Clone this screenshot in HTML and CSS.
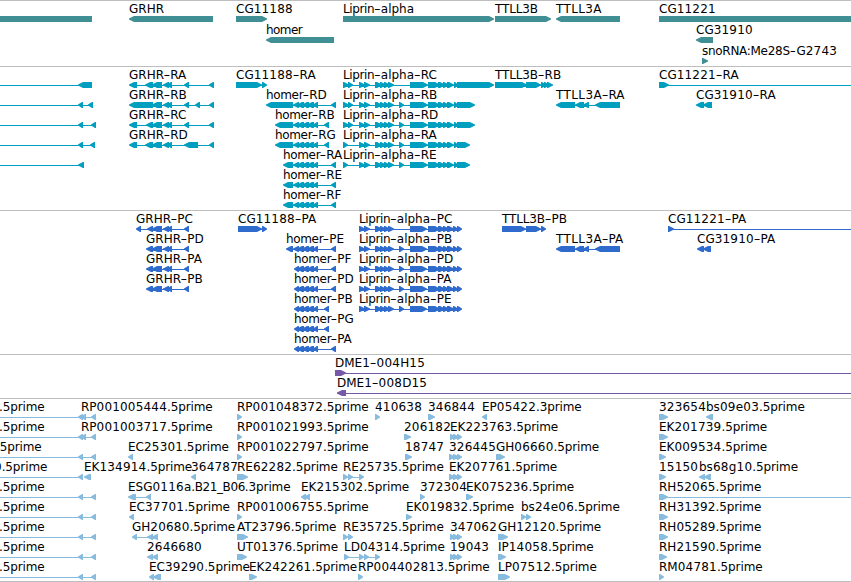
FILE: index.html
```html
<!DOCTYPE html>
<html lang="en">
<head>
<meta charset="utf-8">
<title>Genome browser tracks</title>
<link rel="stylesheet" href="styles.css">
</head>
<body>
<main class="browser" id="browser"></main>
<script src="tracks.js"></script>
</body>
</html>
```
FILE: styles.css
```css
body {
  margin: 0;
  background: #fff;
}

.browser {
  display: flex;
  flex-direction: column;
  width: 851px;
  height: 582px;
  box-sizing: border-box;
  border-bottom: 1px solid #bebebe;
  overflow: hidden;
}

.track {
  display: flex;
  flex-direction: column;
  flex: none;
  box-sizing: border-box;
  padding: 2px 0 1px;
  border-top: 1px solid #bebebe;
}

.row {
  display: block;
  flex: none;
  width: 851px;
  height: 20px;
  overflow: visible;
}

.gene { padding-bottom: 0; color: #3f8f94; }
.gene .row { height: 21px; }
.transcript { color: #009fc0; }
.protein { color: #2f6bcd; }
.clone { color: #7558a8; }
.est { padding-bottom: 0; color: #87bcde; }

.shape { fill: currentColor; }

.label {
  font: 12px "DejaVu Sans", sans-serif;
  fill: #000;
}
```
FILE: tracks.js
```js
// Feature: [label, labelX, strand, exons, lineStart, lineEnd]
// strand: "+" points right, "-" points left, "=" plain block.
const cluster = ' 293-299 297-304 302-309 307-314 313-318 ';
const lipStart = '359-365 364-370 375-382 380-386 384-390 388-394 ';
const lipMid = '410-428 428-440 438-445 443-449 447-454 454-458 ';
const lip = (id, first, extra, end) =>
  ['Liprin-alpha-' + id, 343, '+', first + lipStart + extra + lipMid + '457-' + end];
const lipP = (id, extra) =>
  ['Liprin-alpha-' + id, 359, '+', lipStart + extra + '410-427 428-440 438-445 443-449 447-454 453-458 457-462'];
const hom = (id, x, last) => ['homer-' + id, x, '-', x + '-293' + cluster + last];
const homP = (id, last) => ['homer-' + id, 294, '-', '294-299 297-304 302-309 307-314 313-318 ' + last];
const grhrP = id => ['GRHR-' + id, 146, '-', '146-153 152-162 163-169 167-172 184-189'];
const left = exons => ['', 0, '-', exons, 0];
const leftEst = (label, x, exons) => [label, x, '-', exons, 0];
const A = '343-349 348-353 ', B = '343-348 ', C = '399-404 ';
const triple = x => x + '-455 453-459 457-462';

const tracks = [
  ['gene', [
    [['', 0, '=', '0-92'], ['GRHR', 129, '-', '129-213'], ['CG11188', 236, '+', '236-267'],
     ['Liprin-alpha', 343, '+', '343-494'], ['TTLL3B', 495, '+', '495-551'],
     ['TTLL3A', 556, '-', '556-620'], ['CG11221', 659, '=', '659-851']],
    [['homer', 266, '-', '266-334'], ['CG31910', 696, '-', '696-713']],
    [['snoRNA:Me28S-G2743', 702, '+', '702-708']]
  ]],
  ['transcript', [
    [left('78-92'), ['GRHR-RA', 129, '-', '129-137 145-153 152-162 163-169 167-172 184-189 209-214'],
     ['CG11188-RA', 236, '+', '236-262 262-267'], lip('RC', A, '', 494),
     ['TTLL3B-RB', 495, '+', '495-527 526-541 541-546 544-549 547-553'],
     ['CG11221-RA', 659, '+', '659-669', 659, 851]],
    [left('78-83 88-93'), ['GRHR-RB', 129, '-', '129-153 152-162 163-169 167-172 184-189 195-200 209-214'],
     hom('RD', 266, '331-336'), lip('RB', A, C, 475),
     ['TTLL3A-RA', 556, '-', '556-575 575-584 583-589 595-620'],
     ['CG31910-RA', 696, '-', '696-704 703-712']],
    [left('78-83 91-96'), ['GRHR-RC', 129, '-', '129-137 146-153 152-162 163-169 167-172 184-189 209-214'],
     hom('RB', 275, '324-329'), lip('RD', A, C, 475)],
    [left('78-83 90-95'), ['GRHR-RD', 129, '-', '129-137 145-153 152-162 163-169 167-172 184-198 209-214'],
     hom('RG', 275, '324-329'), lip('RA', B, C, 470)],
    [left('78-84'), hom('RA', 283, '331-336'), lip('RE', B, C, 470)],
    [hom('RE', 283, '331-336')],
    [hom('RF', 283, '331-336')]
  ]],
  ['protein', [
    [['GRHR-PC', 136, '-', '136-141 147-153 152-162 163-169 167-172 184-189'],
     ['CG11188-PA', 238, '+', '238-262 262-267'], lipP('PC', ''),
     ['TTLL3B-PB', 502, '+', '502-526 526-541 541-546'],
     ['CG11221-PA', 668, '+', '668-674', 668, 851]],
    [grhrP('PD'), ['homer-PE', 286, '-', '286-293' + cluster + '331-336'], lipP('PB', C),
     ['TTLL3A-PA', 556, '-', '556-575 575-584 583-589 595-620'],
     ['CG31910-PA', 697, '-', '697-704 703-711']],
    [grhrP('PA'), homP('PF', '331-336'), lipP('PD', C)],
    [grhrP('PB'), homP('PD', '331-336'), lipP('PA', C)],
    [homP('PB', '324-329'), lipP('PE', C)],
    [homP('PG', '324-329')],
    [homP('PA', '331-336')]
  ]],
  ['clone', [
    [['DME1-004H15', 335, '+', '335-346', 335, 851]],
    [['DME1-008D15', 337, '-', '337-346', 337, 851]]
  ]],
  ['est', [
    [leftEst('.5prime', -1, '78-83 81-86 91-96'), ['RP001005444.5prime', 81], ['RP001048372.5prime', 237, '+', '237-242'],
     ['410638', 375, '+', '375-380'], ['346844', 428, '+', '428-435'], ['EP05422.3prime', 482, '-', '482-487'],
     ['323654', 659, '+', '659-668'], ['bs09e03.5prime', 706, '-', '706-713']],
    [leftEst('.5prime', -1, '78-83 81-86 91-96'), ['RP001003717.5prime', 81], ['RP001021993.5prime', 237, '+', '237-242'],
     ['206182', 404, '+', '404-411'], ['EK223763.5prime', 450, '+', triple(450)],
     ['EK201739.5prime', 659, '+', '659-668']],
    [leftEst('.5prime', -4, '78-83 91-96'), ['EC25301.5prime', 128, '-', '128-133'], ['RP001022797.5prime', 237, '+', '237-242'],
     ['18747', 405, '+', '405-412'], ['326445', 449, '+', triple(449)],
     ['GH06660.5prime', 496, '+', '496-505'], ['EK009534.5prime', 659, '+', '659-666']],
    [leftEst('0.5prime', -6, '78-83'), ['EK134914.5prime', 84, '-', '84-91'], ['364787', 191, '-', '191-196'],
     ['RE62282.5prime', 237, '+', '237-248'], ['RE25735.5prime', 343, '+', '343-348 348-353 359-364'],
     ['EK207761.5prime', 449, '+', triple(449)], ['15150', 659, '+', '659-666'],
     ['bs68g10.5prime', 699, '-', '699-705 704-711']],
    [leftEst('.5prime', -1, '78-83 91-96'), ['ESG0116a.B21_B06.3prime', 128, '-', '128-136 146-151'],
     ['EK215302.5prime', 301, '-', '301-306 304-310'], ['372304', 420, '+', '420-425'],
     ['EK075236.5prime', 466, '+', '466-473'], ['RH52065.5prime', 659, '+', '659-668', 659, 851]],
    [leftEst('.5prime', -1, '78-83 91-96'), ['EC37701.5prime', 129, '-', '129-134'], ['RP001006755.5prime', 237, '+', '237-242'],
     ['EK019832.5prime', 406, '+', '406-412'], ['bs24e06.5prime', 521, '+', '521-526 526-531'],
     ['RH31392.5prime', 659, '+', '659-668']],
    [leftEst('.5prime', -1, '78-83 91-96'), ['GH20680.5prime', 132, '-', '132-137 147-153 152-158'],
     ['AT23796.5prime', 237, '+', '237-248'], ['RE35725.5prime', 343, '+', '343-348 348-353'],
     ['347062', 450, '+', triple(450)], ['GH12120.5prime', 498, '+', '498-508'],
     ['RH05289.5prime', 659, '+', '659-668']],
    [leftEst('.5prime', -1, '78-83 91-96'), ['2646680', 147, '-', '147-153 152-158'], ['UT01376.5prime', 237, '+', '237-247'],
     ['LD04314.5prime', 344, '+', '344-349 359-364 364-369 375-380'], ['19043', 450, '+', triple(450)],
     ['IP14058.5prime', 498, '+', '498-506'], ['RH21590.5prime', 659, '+', '659-667']],
    [leftEst('.5prime', -1, '78-83 91-96'), ['EC39290.5prime', 149, '-', '149-154 153-161'],
     ['EK242261.5prime', 249, '+', '249-257'], ['RP004402813.5prime', 358, '+', '358-363'],
     ['LP07512.5prime', 498, '+', '498-510'], ['RM04781.5prime', 659, '+', '659-664']]
  ]]
];

// Blocks occupy y 13-19 of a row; the head takes the last few pixels.
function block(a, b, strand) {
  if (strand === '=') return `M${a} 13H${b}V19H${a}Z`;
  const head = Math.min(b - a, 6);
  if (strand === '+') {
    const n = b - head;
    return `M${a} 13H${n + 1}L${b} 15.5V16.5L${n + 1} 19H${a}Z`;
  }
  const n = a + head;
  return `M${b} 13H${n - 1}L${a} 15.5V16.5L${n - 1} 19H${b}Z`;
}

// Set widths of label pieces, in pixels.
const widths = {
  homer: 36.8, Liprin: 31.5, '-': 6.7, TTLL3B: 43, TTLL3A: 45.4,
  'snoRNA:Me28S': 88, '.B21_B06': 54, '.5prime': 45.7, '.3prime': 45.7
};
const pieces = /homer|Liprin|TTLL3[AB]|snoRNA:Me28S|\.B21_B06|\.[35]prime|-|\d{2,}/g;

function labelText(label) {
  return label.replace(pieces, p => {
    const w = widths[p] ?? (p.length * 7.8).toFixed(2);
    const adjust = p === '-' ? ' lengthAdjust="spacingAndGlyphs"' : '';
    return `<tspan textLength="${w}"${adjust}>${p}</tspan>`;
  });
}

function feature([label, x, strand, exons, from, to]) {
  let out = '';
  if (exons) {
    const parts = exons.trim().split(/\s+/).map(e => e.split('-').map(Number));
    if (parts.length > 1 || from !== undefined) {
      const start = from ?? parts[0][0] + 2;
      const end = to ?? parts[parts.length - 1][1] - 2;
      out += `<rect class="shape" x="${start}" y="16" width="${end - start}" height="1"/>`;
    }
    out += `<path class="shape" d="${parts.map(([a, b]) => block(a, b, strand)).join('')}"/>`;
  }
  if (label) out += `<text class="label" x="${x}" y="10">${labelText(label)}</text>`;
  return out;
}

document.getElementById('browser').innerHTML = tracks.map(([kind, rows]) =>
  `<section class="track ${kind}">${rows.map(r =>
    `<svg class="row">${r.map(feature).join('')}</svg>`).join('')}</section>`).join('');
```
